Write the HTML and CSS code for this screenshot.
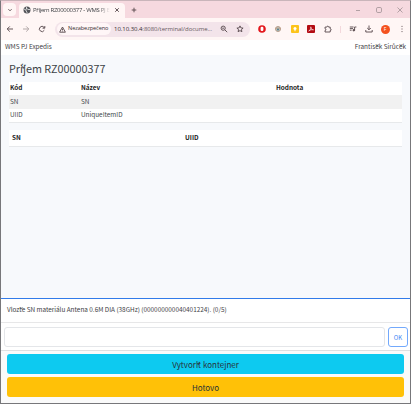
FILE: index.html
```
<!DOCTYPE html>
<html lang="cs">
<head><meta charset="utf-8"><title>WMS PJ Expedis</title><link rel="stylesheet" href="styles.css"></head>
<body>
<div class="window">
  <div class="tabs">
    <span class="tab-menu"><svg width="8" height="8" viewBox="0 0 8 8"><path d="M2.4 3.2L4 4.8l1.6-1.6"/></svg></span>
    <div class="tab">
      <svg class="globe" width="8" height="8" viewBox="0 0 8 8"><circle cx="4" cy="4" r="3.5"/><path d="M1 3l2 1v1l1 1v1M3 1l1 1-1 1h2l1 1 1-1"/></svg>
      <span class="tab-title">Příjem RZ00000377 - WMS PJ E</span>
      <svg class="tab-close" width="6" height="6" viewBox="0 0 6 6"><path d="M1.2 1.2l3.6 3.6M4.8 1.2L1.2 4.8"/></svg>
    </div>
    <svg class="new-tab" width="8" height="8" viewBox="0 0 8 8"><path d="M4 1.7v4.6M1.7 4h4.6"/></svg>
    <div class="controls">
      <svg width="8" height="8" viewBox="0 0 8 8"><path d="M2 4.5h4"/></svg>
      <svg width="8" height="8" viewBox="0 0 8 8"><rect x="1.5" y="1.5" width="5" height="5" rx="1.3"/></svg>
      <svg width="8" height="8" viewBox="0 0 8 8"><path d="M1.5 1.5l5 5M6.5 1.5l-5 5"/></svg>
    </div>
  </div>
  <div class="toolbar">
    <div class="nav">
      <svg width="8" height="8" viewBox="0 0 8 8"><path d="M7 4H1.3M3.8 1.4L1.2 4l2.6 2.6"/></svg>
      <svg class="dim" width="8" height="8" viewBox="0 0 8 8"><path d="M1 4h5.7M4.2 1.4L6.8 4 4.2 6.6"/></svg>
      <svg width="8" height="8" viewBox="0 0 8 8"><path d="M6.3 5.2A2.6 2.6 0 1 1 6 2.3L6.7 3M6.8 1v2.2H4.6"/></svg>
    </div>
    <div class="address">
      <span class="chip"><svg width="7" height="7" viewBox="0 0 7 7"><path d="M3.5 1L6.4 6.2H.6zM3.5 2.7v1.6M3.5 4.8v.6"/></svg><span class="unsafe">Nezabezpečeno</span></span>
      <span class="url"><span class="host">10.10.30.4</span>:8080/terminal/docume...</span>
      <svg class="zoom" width="8" height="8" viewBox="0 0 8 8"><circle cx="3.2" cy="3.2" r="2.1"/><path d="M4.8 4.8l2.4 2.4M2.2 3.2h2"/></svg>
      <svg class="star" width="8" height="8" viewBox="0 0 8 8"><path d="M4 .9l.9 2 2.2.2-1.7 1.5.5 2.1L4 5.6 2.1 6.7l.5-2.1L.9 3.1l2.2-.2z"/></svg>
    </div>
    <div class="extensions">
      <svg width="8" height="8" viewBox="0 0 8 8"><circle cx="4" cy="4" r="3.8" fill="#e3171c" stroke="none"/><rect x="2.6" y="1.8" width="2.8" height="4.2" rx="1.2" fill="#fff" stroke="none"/></svg>
      <svg width="8" height="8" viewBox="0 0 8 8"><circle cx="4" cy="4" r="2.5" fill="#b8c8c4" stroke="#b79c8a" stroke-width="1"/><path d="M1.2 3.2h5.6" stroke="#c99a78" stroke-width=".7"/><circle cx="4" cy="4.4" r="1" fill="#557c8c" stroke="none"/></svg>
      <svg width="8" height="8" viewBox="0 0 8 8"><rect width="8" height="8" rx="1" fill="#fcc31a" stroke="none"/><circle cx="4" cy="3.5" r="1.5" fill="#fff" stroke="none"/><path d="M3.3 5.7h1.4" stroke="#fff"/></svg>
      <svg width="8" height="8" viewBox="0 0 8 8"><rect width="8" height="8" rx="1" fill="#b30b12" stroke="none"/><path d="M1.7 6C3.6 5 4.3 3.2 3.8 1.8 3.4 3.4 5 5 6.5 4.8 4.8 4.3 3 5 1.7 6z" stroke="#fff" stroke-width=".6"/></svg>
      <svg width="8" height="8" viewBox="0 0 8 8"><path d="M1 2.1h1.8a.9.9 0 0 1 1.8 0h1.6v1.7a.9.9 0 0 1 0 1.8V7H1V5.5a.9.9 0 0 0 0-1.8z"/></svg>
    </div>
    <span class="divider"></span>
    <div class="tools">
      <svg width="8" height="8" viewBox="0 0 8 8"><path d="M.8 2h3.8M.8 3.6h3.2M.8 5.2h1.8M5.6 5.3V2h1.8"/><circle cx="4.8" cy="5.2" r=".8" fill="#55464b"/></svg>
      <svg width="8" height="8" viewBox="0 0 8 8"><path d="M4 .5v4M2.2 3L4 4.8 5.8 3M.8 5v2h6.4V5"/></svg>
      <span class="avatar">F</span>
      <svg width="8" height="8" viewBox="0 0 8 8"><path d="M4 .9v1M4 3.5v1M4 6.1v1"/></svg>
    </div>
  </div>
  <header class="header"><span>WMS PJ Expedis</span><span>František Sirůček</span></header>
  <main class="content">
    <h1><span>Příjem RZ00000377</span></h1>
    <div class="table">
      <div class="row head"><span>Kód</span><span>Název</span><span>Hodnota</span></div>
      <div class="row striped"><span>SN</span><span>SN</span><span></span></div>
      <div class="row"><span>UIID</span><span>UniqueItemID</span><span></span></div>
    </div>
    <div class="table serials"><span>SN</span><span>UIID</span></div>
  </main>
  <section class="prompt"><span>Vložte SN materiálu Antena 0.6M DIA (38GHz) (000000000040401224). (0/5)</span></section>
  <form class="entry"><input type="text" aria-label="SN"><button type="button">OK</button></form>
  <footer class="actions"><button class="create"><span>Vytvořit kontejner</span></button><button class="done"><span>Hotovo</span></button></footer>
</div>
</body>
</html>
```
FILE: styles.css
```
* { box-sizing: border-box; }
body { margin: 0; font-family: "Noto Sans CJK SC", "Noto Sans", sans-serif; font-size: 6.4px; line-height: 1; color: #3e4145; }
button { font-family: inherit; padding: 0; }
svg { display: block; flex: none; fill: none; stroke: #55464b; stroke-width: .9; }
span { white-space: nowrap; }
.window { width: 411px; height: 404px; display: flex; flex-direction: column; background: #f7f9fc; border: 1px solid #77777a; border-top-color: #c9b5ba; overflow: hidden; }
.tabs, .toolbar { font-family: "Open Sans", "Noto Sans", sans-serif; }
.tabs { height: 17px; flex: none; display: flex; align-items: center; background: #f6d9df; }
.tab-menu { width: 13px; height: 13px; margin-left: 2px; border-radius: 4px; background: #fff6f5; display: grid; place-items: center; }
.tab { width: 106px; height: 15px; margin: 2px 0 0 3px; padding: 0 4px 1px; display: flex; align-items: center; background: #fff6f5; border-radius: 4px 4px 0 0; }
.globe { fill: #55565b; stroke: none; }
.globe path { stroke: #fff; stroke-width: .7; }
.tab-title { width: 77px; margin-left: 2px; overflow: hidden; line-height: 10px; font-size: 6px; letter-spacing: -.3px; -webkit-mask-image: linear-gradient(90deg, #000 85%, transparent); mask-image: linear-gradient(90deg, #000 85%, transparent); }
.tab-close { margin-left: 4px; }
.new-tab { margin-left: 5px; }
.controls { margin-left: auto; margin-right: 6px; display: flex; gap: 13px; }
.controls svg { stroke: #95868b; stroke-width: .7; }
.toolbar { height: 22px; flex: none; display: flex; align-items: center; background: #fff6f5; }
.nav { display: flex; gap: 8px; margin-left: 5px; }
.dim { stroke: #aaa0a2; }
.address { width: 195px; height: 15px; margin-left: 9px; padding: 0 6px 0 2px; border-radius: 8px; background: #f3e4ea; display: flex; align-items: center; }
.chip { width: 54px; height: 12px; flex: none; border-radius: 6px; background: #fff6f7; display: flex; align-items: center; padding-left: 2px; gap: 2px; }
.unsafe { font-size: 5.6px; letter-spacing: -.08px; color: #352e31; }
.url { width: 99px; flex: none; margin-left: 3px; font-size: 6px; letter-spacing: -.04px; color: #66585d; }
.host { color: #352e31; }
.zoom { margin-left: 7px; }
.star { margin-left: auto; }
.extensions { display: flex; gap: 8.4px; margin-left: 8px; }
.divider { width: 1px; height: 7px; margin-left: 8px; background: #f3d8dc; }
.tools { display: flex; align-items: center; gap: 8px; margin-left: 8px; }
.avatar { width: 9px; height: 9px; border-radius: 50%; background: #f4511e; color: #fff; font-size: 5px; display: grid; place-items: center; }
.header { height: 15px; flex: none; padding: 0 4px; display: flex; align-items: center; justify-content: space-between; background: #fff; }
.content { flex: 1; padding: 0 8px; }
h1 { margin: 0; height: 27px; display: flex; align-items: center; font-size: 10.8px; font-weight: 400; color: #3e4347; }
.table { background: #fff; border-bottom: 1px solid #e7e9eb; color: #45484b; }
.row { height: 13px; display: grid; grid-template-columns: 71px 195px 1fr; align-items: center; padding-left: 1px; }
.head, .serials { color: #222; font-weight: 700; }
.striped { height: 14px; background: #f1f1f1; }
.serials { height: 17px; margin-top: 7px; display: grid; grid-template-columns: 173px 1fr; align-items: center; padding-left: 3px; }
.prompt { height: 25px; flex: none; display: flex; align-items: center; padding-left: 6px; background: #fff; border-top: 1px solid #327be9; border-bottom: 1px solid #e7e7e8; }
.entry { height: 28px; flex: none; display: flex; gap: 3px; padding: 4px 2px 0 3px; background: #fff; border-bottom: 1px solid #dedfe1; }
.entry input { width: 381px; height: 20px; padding: 0 5px; border: 1px solid #e4e6e9; border-radius: 3px; background: #fff; }
.entry button { width: 20px; height: 20px; border: 1px solid #73a9fc; border-radius: 3px; background: #fff; color: #4388f5; font-size: 6px; }
.actions { height: 52px; flex: none; display: flex; flex-direction: column; gap: 3px; padding: 3px 6px 0; background: #fafafa; }
.actions button { height: 20px; border: 0; border-radius: 3px; color: #263238; font-size: 8px; }
.actions .create { background: #0dcaf0; }
.actions .done { background: #ffc107; }
```
